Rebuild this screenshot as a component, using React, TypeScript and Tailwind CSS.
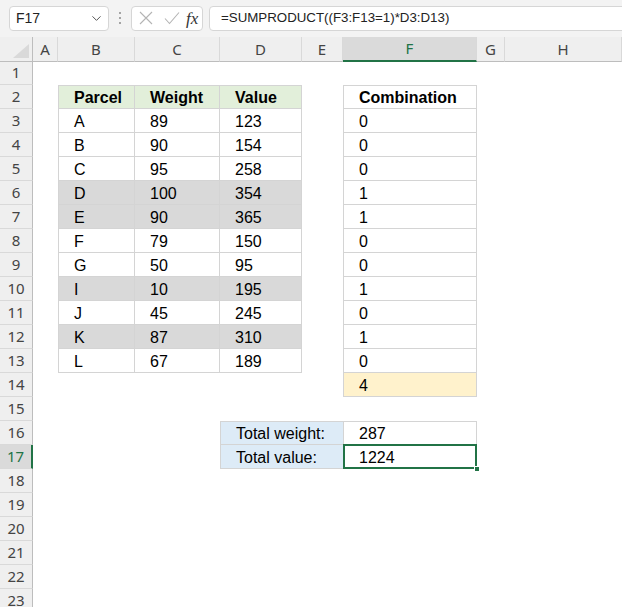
import React from 'react';
import { ChevronDown } from 'lucide-react';

type CellDef = { text?: string; cls?: string; bold?: boolean; span?: number; selected?: boolean };

const COLS = ['A', 'B', 'C', 'D', 'E', 'F', 'G', 'H'];

const parcels: [string, string, string, boolean][] = [
  ['A', '89', '123', false],
  ['B', '90', '154', false],
  ['C', '95', '258', false],
  ['D', '100', '354', true],
  ['E', '90', '365', true],
  ['F', '79', '150', false],
  ['G', '50', '95', false],
  ['I', '10', '195', true],
  ['J', '45', '245', false],
  ['K', '87', '310', true],
  ['L', '67', '189', false],
];

const combo = ['0', '0', '0', '1', '1', '0', '0', '1', '0', '1', '0'];

// build the cell map once
const cells: Record<string, CellDef> = {};
const line = 'border-[#d4d4d4]';

cells['B2'] = { text: 'Parcel', bold: true, cls: `bg-[#e2efda] border-t border-l border-r border-b ${line}` };
cells['C2'] = { text: 'Weight', bold: true, cls: `bg-[#e2efda] border-t border-r border-b ${line}` };
cells['D2'] = { text: 'Value', bold: true, cls: `bg-[#e2efda] border-t border-r border-b ${line}` };
cells['F2'] = { text: 'Combination', bold: true, cls: `bg-white border-t border-l border-r border-b ${line}` };

parcels.forEach(([p, w, v, grey], i) => {
  const r = i + 3;
  const bg = grey ? 'bg-[#d9d9d9]' : 'bg-white';
  cells[`B${r}`] = { text: p, cls: `${bg} border-l border-r border-b ${line}` };
  cells[`C${r}`] = { text: w, cls: `${bg} border-r border-b ${line}` };
  cells[`D${r}`] = { text: v, cls: `${bg} border-r border-b ${line}` };
  cells[`F${r}`] = { text: combo[i], cls: `bg-white border-l border-r border-b ${line}` };
});

cells['F14'] = { text: '4', cls: `bg-[#fff2cc] border-l border-r border-b ${line}` };

cells['D16'] = { text: 'Total weight:', span: 2, cls: `bg-[#ddebf7] border-t border-l border-b ${line}` };
cells['F16'] = { text: '287', cls: `bg-white border-t border-l border-r border-b ${line}` };
cells['D17'] = { text: 'Total value:', span: 2, cls: `bg-[#ddebf7] border-l border-b ${line}` };
cells['F17'] = { text: '1224', selected: true, cls: `bg-white border-l border-r border-b ${line}` };

const FormulaBar: React.FC = () => (
  <div className="flex h-[37px] items-center bg-[#f3f3f3] pb-[1px]">
    <div className="ml-[9px] flex h-[25px] w-[100px] shrink-0 items-center justify-between rounded-[4px] border border-[#d6d6d6] bg-white pl-[6px] pr-[4px]">
      <span className="text-[14px] text-[#222]">F17</span>
      <ChevronDown size={15} strokeWidth={1.6} className="text-[#555]" />
    </div>
    <div className="flex w-[22px] shrink-0 flex-col items-center justify-center gap-[3px]">
      <span className="h-[2px] w-[2px] rounded-full bg-[#8a8a8a]" />
      <span className="h-[2px] w-[2px] rounded-full bg-[#8a8a8a]" />
      <span className="h-[2px] w-[2px] rounded-full bg-[#8a8a8a]" />
    </div>
    <div className="flex h-[25px] w-[72px] shrink-0 items-center rounded-[4px] border border-[#d6d6d6] bg-white pl-[7px]">
      <svg width="14" height="14" viewBox="0 0 14 14" className="mr-[11px] shrink-0">
        <path d="M1 1 L13 13 M13 1 L1 13" stroke="#b4b4b4" strokeWidth="1.1" fill="none" />
      </svg>
      <svg width="16" height="14" viewBox="0 0 16 14" className="mr-[6px] shrink-0">
        <path d="M1 7.5 L5.5 12.5 L15 1.5" stroke="#b4b4b4" strokeWidth="1.1" fill="none" />
      </svg>
      <span className="font-['Liberation_Serif',serif] text-[17px] italic leading-none text-[#333]">fx</span>
    </div>
    <div className="ml-[6px] flex h-[25px] w-[430px] shrink-0 items-center rounded-[4px] border border-[#d6d6d6] bg-white pl-[11px]">
      <span className="text-[13.3px] text-[#222]">=SUMPRODUCT((F3:F13=1)*D3:D13)</span>
    </div>
  </div>
);

const App: React.FC = () => {
  const rows = Array.from({ length: 23 }, (_, i) => i + 1);

  return (
    <div className="h-[607px] w-[622px] overflow-hidden bg-white font-['Liberation_Sans',Arial,sans-serif]">
      <FormulaBar />

      <div className="grid grid-cols-[33px_25px_77px_85px_82px_41px_134px_28px_1fr] auto-rows-[24px]">
        {/* corner + column headers */}
        <div className="relative h-[25px] border-r border-b border-[#bdbdbd] bg-[#efefef]">
          <svg width="16" height="14" viewBox="0 0 16 14" className="absolute right-[3px] bottom-[3px]">
            <polygon points="16,0 16,14 0,14" fill="#d9d9d9" />
          </svg>
        </div>
        {COLS.map(c => (
          <div
            key={c}
            className={
              c === 'F'
                ? 'flex h-[25px] items-center justify-center border-r border-b-2 border-r-[#d9d9d9] border-b-[#217346] bg-[#dadada] font-["Noto_Sans",sans-serif] text-[15px] text-[#217346]'
                : 'flex h-[25px] items-center justify-center border-r border-b border-r-[#d9d9d9] border-b-[#bdbdbd] bg-[#efefef] font-["Noto_Sans",sans-serif] text-[15px] text-[#444]'
            }
          >
            {c}
          </div>
        ))}

        {rows.map(r => (
          <React.Fragment key={r}>
            <div
              className={
                r === 17
                  ? 'flex items-center justify-center border-b border-r-2 border-b-[#d9d9d9] border-r-[#217346] bg-[#dadada] font-["Noto_Sans",sans-serif] text-[15px] text-[#217346]'
                  : 'flex items-center justify-center border-b border-r border-b-[#d9d9d9] border-r-[#bdbdbd] bg-[#efefef] font-["Noto_Sans",sans-serif] text-[15px] text-[#444]'
              }
            >
              {r}
            </div>
            {COLS.map(c => {
              if ((r === 16 || r === 17) && c === 'E') return null;
              const def = cells[`${c}${r}`];
              if (!def) return <div key={c} />;
              return (
                <div
                  key={c}
                  className={`relative flex items-center pl-[15px] pt-[2px] text-[16px] text-black ${def.bold ? 'font-bold' : ''} ${def.span === 2 ? 'col-span-2' : ''} ${def.cls ?? ''}`}
                >
                  {def.text}
                  {def.selected && (
                    <>
                      <div className="absolute -top-[1px] -left-[1px] -right-[1px] -bottom-[1px] border-2 border-[#217346]" />
                      <div className="absolute -right-[4px] -bottom-[4px] h-[6px] w-[6px] border border-white bg-[#217346]" />
                    </>
                  )}
                </div>
              );
            })}
          </React.Fragment>
        ))}
      </div>
    </div>
  );
};

export default App;
